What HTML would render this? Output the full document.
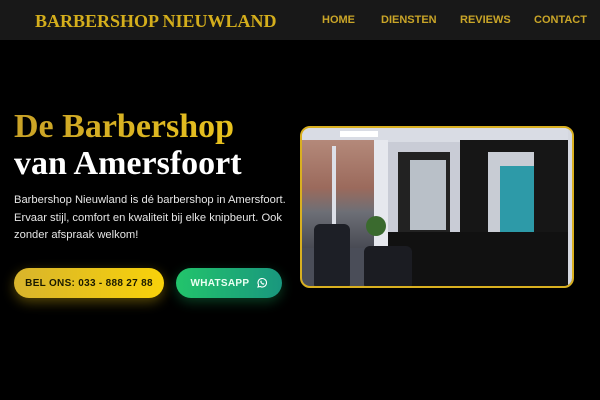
<!DOCTYPE html>
<html><head><meta charset="utf-8"><style>
*{margin:0;padding:0;box-sizing:border-box}
body{width:600px;height:400px;background:#000;overflow:hidden;font-family:"Liberation Sans",sans-serif;position:relative}
.hdr{position:absolute;left:0;top:0;width:600px;height:40px;background:#181818}
.logo{position:absolute;left:35px;top:11px;font-family:"Liberation Serif",serif;font-weight:bold;font-size:18px;color:#d4ae1c;white-space:nowrap}
.nav{position:absolute;top:14px;font-size:11px;font-weight:bold;color:#c9a528}
h1{position:absolute;left:14px;top:108px;font-family:"Liberation Serif",serif;font-weight:bold;font-size:34px;line-height:37px;white-space:nowrap}
.g{background:linear-gradient(90deg,#c9a227,#e8c21e);-webkit-background-clip:text;color:transparent}
.w{color:#fff}
p{position:absolute;left:14px;top:192px;width:284px;font-size:11.2px;line-height:17.5px;color:#e6e6e6}
.btn{position:absolute;top:268px;height:30px;border-radius:15px;font-size:10px;font-weight:bold;display:flex;align-items:center;justify-content:center;letter-spacing:0.3px}
.b1{left:14px;width:150px;background:linear-gradient(90deg,#d8b42c,#f8d20a);color:#1a1a00;box-shadow:0 4px 12px rgba(240,200,20,0.35)}
.b2{left:176px;width:106px;background:linear-gradient(90deg,#22c46b,#19977e);color:#eafff2;box-shadow:0 4px 12px rgba(30,200,110,0.3)}
.ph{position:absolute;left:300px;top:126px;width:274px;height:162px;border:2px solid #d9b020;border-radius:10px;overflow:hidden;background:#c9ccd6}
.ph div{position:absolute}
</style></head><body>
<div class="hdr">
<div class="logo">BARBERSHOP NIEUWLAND</div>
<div class="nav" style="left:322px">HOME</div>
<div class="nav" style="left:381px">DIENSTEN</div>
<div class="nav" style="left:460px">REVIEWS</div>
<div class="nav" style="left:534px">CONTACT</div>
</div>
<h1><span class="g">De Barbershop</span><br><span class="w">van Amersfoort</span></h1>
<p>Barbershop Nieuwland is dé barbershop in Amersfoort.<br>Ervaar stijl, comfort en kwaliteit bij elke knipbeurt. Ook<br>zonder afspraak welkom!</p>
<div class="btn b1">BEL ONS: 033 - 888 27 88</div>
<div class="btn b2">WHATSAPP&nbsp;&nbsp;<svg width="12" height="12" viewBox="0 0 24 24" fill="none" stroke="#fff" stroke-width="2.2"><path d="M4 20l1.3-4A8.5 8.5 0 1 1 8.5 19z"/><path d="M9 8.5c0 3 3 6 6 6.5l1-1.5-2-1-1 .8c-1-.5-2-1.5-2.5-2.5l.8-1-1-2z" stroke-width="1.2"/></svg></div>
<div class="ph">
<div style="left:0;top:0;width:274px;height:14px;background:#d9dce4"></div>
<div style="left:38px;top:3px;width:38px;height:6px;background:#fff"></div>
<div style="left:0;top:12px;width:72px;height:120px;background:linear-gradient(180deg,#b4897a 0%,#9b6a5c 40%,#6d6f76 60%,#3c3f48 100%)"></div>
<div style="left:30px;top:18px;width:4px;height:120px;background:#dde0e8"></div>
<div style="left:72px;top:12px;width:14px;height:140px;background:#e6e8ee"></div>
<div style="left:0;top:120px;width:80px;height:42px;background:#4a4d58"></div>
<div style="left:96px;top:24px;width:52px;height:110px;background:#222"></div>
<div style="left:108px;top:32px;width:36px;height:70px;background:#b9c0c8"></div>
<div style="left:158px;top:12px;width:112px;height:124px;background:#161616"></div>
<div style="left:186px;top:24px;width:46px;height:90px;background:#c8ccd4"></div>
<div style="left:198px;top:38px;width:34px;height:75px;background:#2d9aa8"></div>
<div style="left:86px;top:104px;width:186px;height:58px;background:#111"></div>
<div style="left:12px;top:96px;width:36px;height:66px;background:#1d1f26;border-radius:6px"></div>
<div style="left:62px;top:118px;width:48px;height:44px;background:#1b1c22;border-radius:6px"></div>
<div style="left:64px;top:88px;width:20px;height:20px;background:#3a6a2e;border-radius:50%"></div>
<div style="left:266px;top:0;width:8px;height:162px;background:#d5d8e0"></div>
</div>
</body></html>
